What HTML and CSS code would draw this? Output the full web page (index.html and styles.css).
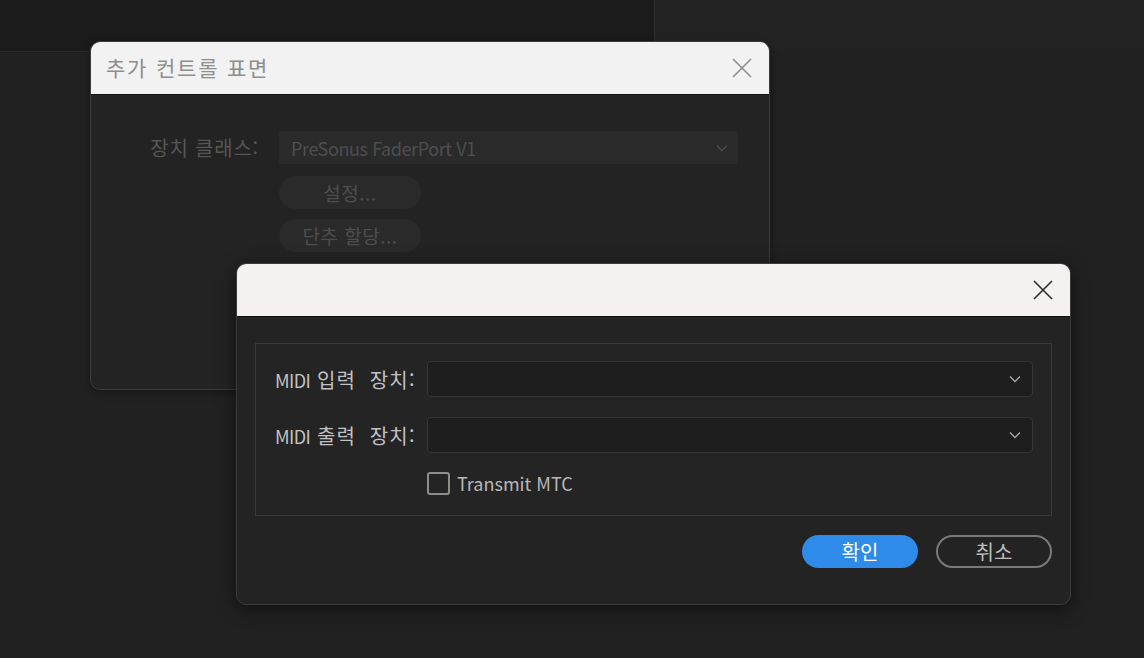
FILE: index.html
```html
<!DOCTYPE html>
<html lang="ko">
<head>
  <meta charset="UTF-8" />
  <title>추가 컨트롤 표면</title>
  <link rel="stylesheet" href="styles.css">
</head>
<body>
  <div class="desktop">
    <div class="panel-top"></div>

    <!-- background dialog -->
    <section class="dialog dialog-back">
      <header class="titlebar">
        <span class="title">추가 컨트롤 표면</span>
        <span class="close">
          <svg width="20" height="20" viewBox="0 0 20 20"><path d="M1 1L19 19M19 1L1 19" /></svg>
        </span>
      </header>
      <div class="dialog-body back-body">
        <div class="back-grid">
          <span class="back-label">장치 클래스:</span>
          <div class="back-select">
            <span>PreSonus FaderPort V1</span>
            <svg class="chevron" width="12" height="8" viewBox="0 0 12 8"><path d="M1 1.5L6 6.5L11 1.5" /></svg>
          </div>
          <span></span>
          <div class="back-buttons">
            <span class="pill-btn">설정...</span>
            <span class="pill-btn">단추 할당...</span>
          </div>
        </div>
      </div>
    </section>

    <!-- front dialog -->
    <section class="dialog dialog-front">
      <header class="titlebar">
        <span class="title"></span>
        <span class="close">
          <svg width="20" height="20" viewBox="0 0 20 20"><path d="M1 1L19 19M19 1L1 19" /></svg>
        </span>
      </header>
      <div class="dialog-body front-body">
        <div class="group">
          <label class="field-label"><span class="latin">MIDI</span> 입력&nbsp; 장치:</label>
          <div class="select">
            <svg class="chevron" width="12" height="8" viewBox="0 0 12 8"><path d="M1 1.5L6 6.5L11 1.5" /></svg>
          </div>
          <label class="field-label"><span class="latin">MIDI</span> 출력&nbsp; 장치:</label>
          <div class="select">
            <svg class="chevron" width="12" height="8" viewBox="0 0 12 8"><path d="M1 1.5L6 6.5L11 1.5" /></svg>
          </div>
          <span></span>
          <div class="check-row">
            <span class="checkbox"></span>
            <span class="check-text">Transmit MTC</span>
          </div>
        </div>
        <div class="actions">
          <button class="btn btn-primary">확인</button>
          <button class="btn btn-outline">취소</button>
        </div>
      </div>
    </section>
  </div>
</body>
</html>
```

FILE: styles.css
```css
* {
  box-sizing: border-box;
  margin: 0;
  padding: 0;
}

html, body {
  width: 100%;
  height: 100%;
  overflow: hidden;
}

body {
  background: #212121;
  font-family: 'Noto Sans CJK KR', 'Noto Sans', sans-serif;
  color: #bdbdbd;
}

.desktop {
  position: relative;
  width: 1144px;
  height: 658px;
  background: #212121;
}

.panel-top {
  display: flex;
  height: 51px;
  background: linear-gradient(90deg, #1b1b1b 0, #1b1b1b 654px, #2c2c2c 654px, #2c2c2c 655px, #232323 655px);
}

.panel-top::after {
  content: '';
  width: 655px;
  height: 51px;
  border-bottom: 1px solid #2a2a2a;
}

/* windows */
.dialog {
  position: absolute;
  display: flex;
  flex-direction: column;
  border-radius: 10px;
  overflow: hidden;
  background: #232323;
  border: 1px solid #3c3c3c;
}

.dialog-back {
  left: 90px;
  top: 41px;
  width: 680px;
  height: 349px;
  box-shadow: 0 2px 8px rgba(0, 0, 0, 0.35);
}

.dialog-front {
  left: 236px;
  top: 263px;
  width: 835px;
  height: 342px;
  box-shadow: 0 4px 18px rgba(0, 0, 0, 0.55);
}

.titlebar {
  height: 53px;
  flex: none;
  display: flex;
  align-items: center;
  justify-content: space-between;
  padding: 0 17px 0 15px;
  background: #f2f2f2;
  border-bottom: 1px solid #111;
}

.dialog-front .titlebar {
  background: #f4f1f0;
}

.title {
  font-size: 21px;
  color: #8e8e8e;
  letter-spacing: 1.8px;
  margin-top: -3px;
}

.close {
  display: flex;
}

.close svg path {
  stroke: #8e8e8e;
  stroke-width: 1.6;
  fill: none;
}

.dialog-front .close svg path {
  stroke: #2b2b2b;
}

.chevron path {
  fill: none;
  stroke: #a5a5a5;
  stroke-width: 1.4;
}

/* background dialog body */
.back-body {
  flex: 1;
  padding: 36px 0 0 0;
}

.back-grid {
  display: grid;
  grid-template-columns: 168px 459px;
  column-gap: 20px;
  row-gap: 12px;
  align-items: center;
}

.back-label {
  text-align: right;
  font-size: 20px;
  letter-spacing: 0.8px;
  color: #565656;
}

.back-select {
  height: 33px;
  display: flex;
  align-items: center;
  justify-content: space-between;
  padding: 0 10px 0 12px;
  background: #2a2a2a;
  border-radius: 2px;
  font-size: 18px;
  letter-spacing: -0.4px;
  color: #4e4e4e;
}

.back-select .chevron path {
  stroke: #4c4c4c;
}

.back-buttons {
  display: flex;
  flex-direction: column;
  gap: 10px;
}

.pill-btn {
  width: 142px;
  height: 33px;
  display: flex;
  align-items: center;
  justify-content: center;
  border-radius: 17px;
  background: #2a2a2a;
  font-size: 19px;
  letter-spacing: 0.5px;
  color: #4e4e4e;
}

/* front dialog body */
.front-body {
  flex: 1;
  padding: 26px 18px 0 18px;
  display: flex;
  flex-direction: column;
  gap: 19px;
}

.group {
  height: 173px;
  display: grid;
  grid-template-columns: 142px 1fr;
  column-gap: 10px;
  row-gap: 20px;
  align-items: center;
  grid-auto-rows: min-content;
  align-content: start;
  padding: 17px 18px 0 19px;
  background: #242424;
  border: 1px solid #393939;
}

.field-label {
  font-size: 20px;
  letter-spacing: 1.2px;
  color: #c2c2c2;
  white-space: nowrap;
}

.field-label .latin {
  font-size: 18px;
  letter-spacing: -0.6px;
}

.select {
  height: 36px;
  display: flex;
  align-items: center;
  justify-content: flex-end;
  padding-right: 11px;
  background: #1e1e1e;
  border: 1px solid #353535;
  border-radius: 4px;
}

.check-row {
  display: flex;
  align-items: center;
  gap: 7px;
  margin-top: -3px;
}

.checkbox {
  width: 23px;
  height: 23px;
  border: 2px solid #8d8d8d;
  border-radius: 3px;
}

.check-text {
  font-size: 18px;
  color: #b8b8b8;
}

.actions {
  display: flex;
  justify-content: flex-end;
  gap: 18px;
}

.btn {
  width: 116px;
  height: 33px;
  border-radius: 17px;
  font-family: inherit;
  font-size: 20px;
  display: flex;
  align-items: center;
  justify-content: center;
}

.btn-primary {
  background: #2e8be9;
  border: none;
  color: #ffffff;
}

.btn-outline {
  background: transparent;
  border: 2px solid #7a7a7a;
  color: #bdbdbd;
}
```
